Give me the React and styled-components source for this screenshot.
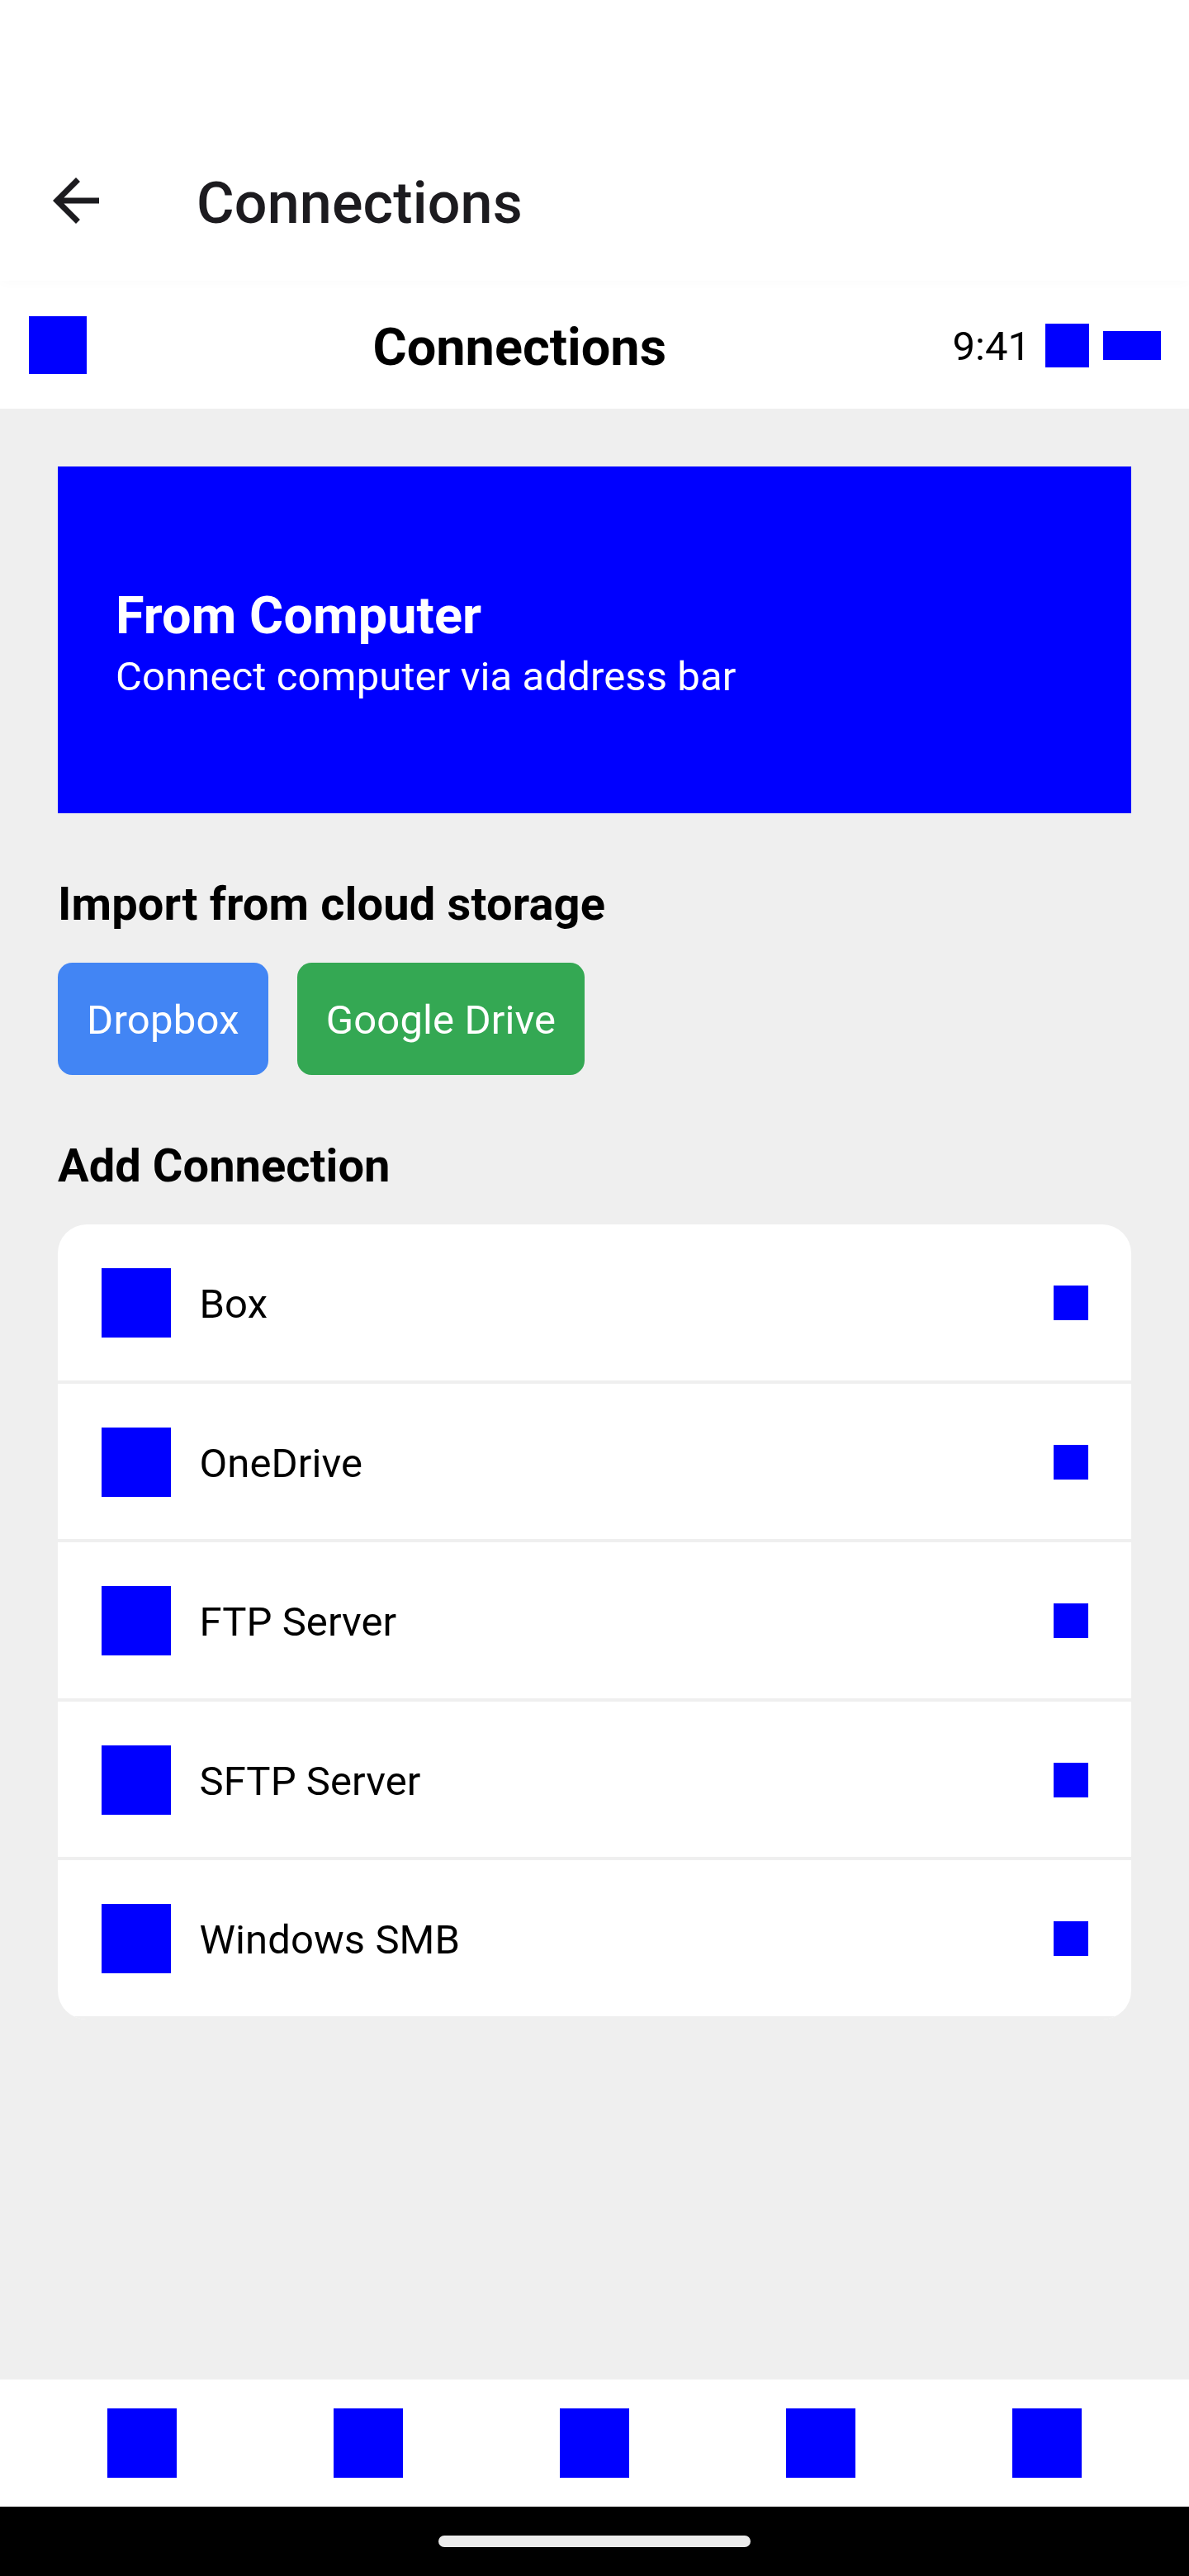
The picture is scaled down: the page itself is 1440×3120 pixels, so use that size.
import React from "react";
import styled, { createGlobalStyle } from "styled-components";

const GlobalStyle = createGlobalStyle`
  * { box-sizing: border-box; }
  body { margin: 0; background: #efefef; }
`;

const Screen = styled.div`
  display: flex;
  flex-direction: column;
  width: 1440px;
  height: 3120px;
  background: #efefef;
  font-family: Roboto, sans-serif;
  color: #000;
`;

const AppBar = styled.header`
  display: flex;
  align-items: center;
  gap: 104px;
  height: 340px;
  padding: 146px 50px 0;
  background: #fff;
  box-shadow: 0 3px 14px rgba(0, 0, 0, 0.02);
  z-index: 1;
`;

const BackIcon = styled.svg`
  width: 84px;
  height: 84px;
  fill: #1c1b1f;
`;

const Label = styled.span`
  display: block;
  padding-top: 0.102em;
  font-size: ${(p) => p.$size}px;
  font-weight: ${(p) => p.$weight || 400};
  line-height: 1.225;
  letter-spacing: ${(p) => p.$track || 0}px;
  white-space: nowrap;
`;

const AppBarTitle = styled(Label)`
  color: #1c1b1f;
`;

const Header = styled.div`
  display: flex;
  align-items: center;
  justify-content: space-between;
  height: 155px;
  padding: 1px 34px 0 35px;
  background: #fff;
`;

const HeaderTitle = styled(Label)`
  margin-bottom: 2px;
`;

const Status = styled.div`
  display: flex;
  align-items: center;
  gap: 17.5px;
`;

const Block = styled.div`
  flex: none;
  width: ${(p) => p.$w}px;
  height: ${(p) => p.$h || p.$w}px;
  background: #00f;
`;

const Content = styled.main`
  flex: 1;
  padding: 70px;
`;

const Banner = styled.section`
  display: flex;
  flex-direction: column;
  justify-content: center;
  gap: 1px;
  height: 420px;
  padding: 0 70px;
  background: #00f;
  color: #fff;
`;

const Heading = styled(Label)`
  height: 76px;
  margin: 70px 0 35px;
`;

const Buttons = styled.div`
  display: flex;
  gap: 35px;
`;

const CloudButton = styled.div`
  height: 136px;
  padding: 35px;
  border-radius: 17.5px;
  background: ${(p) => p.$color};
  color: #fff;
`;

const List = styled.div`
  border-radius: 35px;
  overflow: hidden;
  background: #fff;
`;

const Row = styled.div`
  display: flex;
  align-items: center;
  gap: 35px;
  height: 192.5px;
  padding: 1.5px 52.5px 0;
  border-bottom: 4px solid #efefef;
`;

const RowLabel = styled(Label)`
  flex: 1;
`;

const TabBar = styled.nav`
  display: flex;
  align-items: center;
  justify-content: space-around;
  height: 154px;
  padding: 0 35px;
  background: #fff;
`;

const SystemBar = styled.footer`
  display: flex;
  align-items: center;
  justify-content: center;
  height: 84px;
  background: #000;
`;

const Handle = styled.div`
  width: 378px;
  height: 14px;
  border-radius: 7px;
  background: #ebebeb;
`;

const connections = ["Box", "OneDrive", "FTP Server", "SFTP Server", "Windows SMB"];
const tabs = ["home", "files", "connections", "transfer", "settings"];

export default function App() {
  return (
    <Screen>
      <GlobalStyle />
      <AppBar>
        <BackIcon viewBox="0 0 24 24">
          <path d="M20 11H7.83l5.59-5.59L12 4l-8 8 8 8 1.41-1.41L7.83 13H20v-2z" />
        </BackIcon>
        <AppBarTitle $size={70} $weight={500} $track={0.15}>Connections</AppBarTitle>
      </AppBar>
      <Header>
        <Block $w={70} />
        <HeaderTitle $size={63} $weight={700}>Connections</HeaderTitle>
        <Status>
          <Label $size={49}>9:41</Label>
          <Block $w={53} />
          <Block $w={70} $h={35} />
        </Status>
      </Header>
      <Content>
        <Banner>
          <Label $size={63} $weight={700} $track={0.08}>From Computer</Label>
          <Label $size={49} $track={0.12}>Connect computer via address bar</Label>
        </Banner>
        <Heading $size={56} $weight={700} $track={0.15}>Import from cloud storage</Heading>
        <Buttons>
          <CloudButton $color="#4285f4">
            <Label $size={49} $track={0.25}>Dropbox</Label>
          </CloudButton>
          <CloudButton $color="#34a853">
            <Label $size={49} $track={0.12}>Google Drive</Label>
          </CloudButton>
        </Buttons>
        <Heading $size={56} $weight={700} $track={0.05}>Add Connection</Heading>
        <List>
          {connections.map((name) => (
            <Row key={name}>
              <Block $w={84} />
              <RowLabel $size={49} $track={0.08}>{name}</RowLabel>
              <Block $w={42} />
            </Row>
          ))}
        </List>
      </Content>
      <TabBar>
        {tabs.map((tab) => (
          <Block key={tab} $w={84} />
        ))}
      </TabBar>
      <SystemBar>
        <Handle />
      </SystemBar>
    </Screen>
  );
}
